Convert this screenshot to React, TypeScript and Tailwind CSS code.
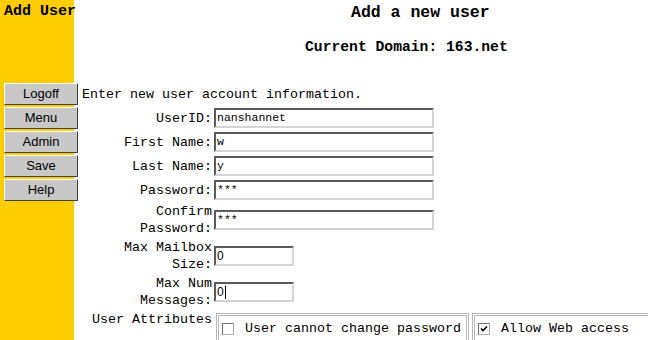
import React from 'react'

const mono = "font-['Liberation_Mono','DejaVu_Sans_Mono',monospace]"

function NavButton({ label }: { label: string }) {
  return (
    <div className="h-[22px] w-[74px] flex items-center justify-center bg-[#c8c8c8] border border-t-white border-l-white border-r-[#404040] border-b-[#404040] text-[13px] text-black font-['Liberation_Sans',Arial,sans-serif]">
      {label}
    </div>
  )
}

function Field({ value, wide = true, sans = false, caret = false }: { value: string; wide?: boolean; sans?: boolean; caret?: boolean }) {
  return (
    <div
      className={[
        'ml-[2px] h-[20px] flex items-center pl-[1px] bg-white border-2 border-t-[#5a5a5a] border-l-[#5a5a5a] border-r-[#d4d4d4] border-b-[#d4d4d4] text-black',
        wide ? 'w-[220px]' : 'w-[80px]',
        sans ? "text-[12px] font-['Liberation_Sans',Arial,sans-serif]" : `text-[11.5px] ${mono}`,
      ].join(' ')}
    >
      {value}
      {caret && <span className="ml-[1px] inline-block w-px h-[13px] bg-black" />}
    </div>
  )
}

function Row({ label, children }: { label: React.ReactNode; children: React.ReactNode }) {
  return (
    <div className="flex items-center min-h-[22px]">
      <div className="w-[130px] text-right leading-[17px]">{label}</div>
      {children}
    </div>
  )
}

function Check({ checked }: { checked?: boolean }) {
  return (
    <span className="relative inline-block w-[12px] h-[12px] border border-t-[#707070] border-l-[#707070] border-r-[#b0b0b0] border-b-[#b0b0b0] bg-white">
      {checked && (
        <svg viewBox="0 0 10 10" className="absolute inset-0 w-[10px] h-[10px]">
          <path d="M2 4.5 L4 6.5 L8 2.5" stroke="black" strokeWidth="1.6" fill="none" />
        </svg>
      )}
    </span>
  )
}

export default function App() {
  return (
    <div className={`w-[648px] h-[340px] overflow-hidden flex bg-white text-black text-[13.33px] ${mono}`}>
      <div className="w-[74px] shrink-0 bg-[#ffcc00] relative z-10">
        <div className="h-[24px] leading-[24px] pl-[4px] text-[15px] font-bold whitespace-nowrap">Add User</div>
        <div className="mt-[59px] ml-[4px] flex flex-col gap-[2px]">
          <NavButton label="Logoff" />
          <NavButton label="Menu" />
          <NavButton label="Admin" />
          <NavButton label="Save" />
          <NavButton label="Help" />
        </div>
      </div>

      <div className="flex-1 pl-[8px] whitespace-nowrap">
        <div className="h-[26px] leading-[26px] pl-[269px] text-[16.5px] font-bold">Add a new user</div>
        <div className="mt-[12px] h-[18px] leading-[18px] pl-[223px] text-[14.7px] font-bold">Current Domain: 163.net</div>
        <div className="mt-[30px] h-[18px] leading-[18px]">Enter new user account information.</div>

        <div className="mt-[3px] flex flex-col gap-[2px]">
          <Row label="UserID:"><Field value="nanshannet" /></Row>
          <Row label="First Name:"><Field value="w" /></Row>
          <Row label="Last Name:"><Field value="y" /></Row>
          <Row label="Password:"><Field value="***" /></Row>
          <Row label={<>Confirm<br />Password:</>}><Field value="***" /></Row>
          <Row label={<>Max Mailbox<br />Size:</>}><Field value="0" wide={false} sans /></Row>
          <Row label={<>Max Num<br />Messages:</>}><Field value="0" wide={false} sans caret /></Row>
          <div className="flex items-start">
            <div className="w-[130px] text-right leading-[17px]">User Attributes</div>
            <div className="ml-[4px] mt-[2px] flex gap-[3px]">
              <div className="w-[253px] h-[32px] border-[3px] border-double border-[#b8b8b8] flex items-center pl-[3px] gap-[11px]">
                <Check />
                <span>User cannot change password</span>
              </div>
              <div className="w-[200px] h-[32px] border-[3px] border-double border-[#b8b8b8] flex items-center pl-[3px] gap-[11px]">
                <Check checked />
                <span>Allow Web access</span>
              </div>
            </div>
          </div>
        </div>
      </div>
    </div>
  )
}
